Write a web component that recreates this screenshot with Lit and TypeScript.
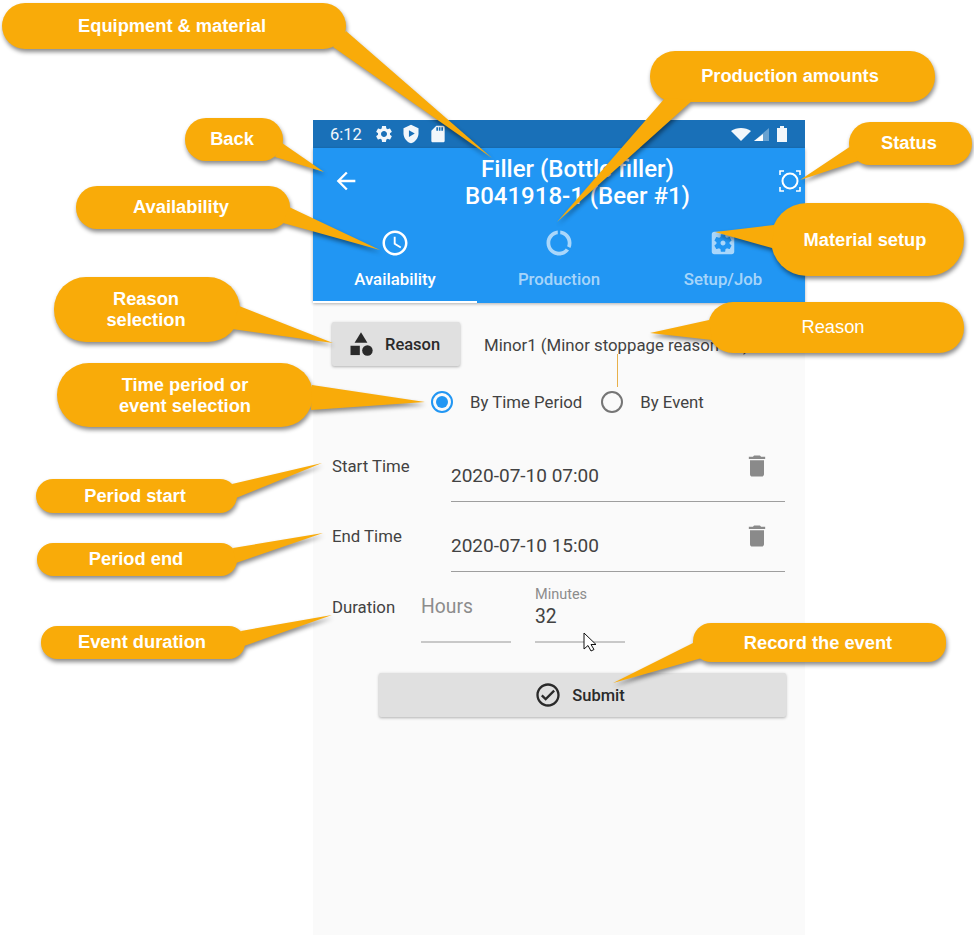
import { LitElement, html, css, svg } from "lit";
import { customElement } from "lit/decorators.js";

interface Callout {
  x: number;
  y: number;
  w: number;
  h: number;
  r: number;
  tail: string;
  cx: number;
  lines: { y: number; text: string }[];
  plain?: boolean;
}

const CALLOUTS: Callout[] = [
  { x: 2, y: 3, w: 344, h: 46, r: 23, tail: "346,31 492,158 333,47", cx: 172, lines: [{ y: 26, text: "Equipment & material" }] },
  { x: 185, y: 118, w: 98, h: 43, r: 21, tail: "282,143 324,172 275,157", cx: 232, lines: [{ y: 139, text: "Back" }] },
  { x: 76, y: 186, w: 214, h: 43, r: 21, tail: "289,207 380,250 283,223", cx: 181, lines: [{ y: 207, text: "Availability" }] },
  { x: 650, y: 51, w: 285, h: 51, r: 25, tail: "665,98 557,222 693,100", cx: 790, lines: [{ y: 76, text: "Production amounts" }] },
  { x: 849, y: 122, w: 123, h: 43, r: 21, tail: "851,146 800,180 858,161", cx: 909, lines: [{ y: 143, text: "Status" }] },
  { x: 771, y: 203, w: 193, h: 73, r: 36, tail: "774,225 715,232 772,248", cx: 865, lines: [{ y: 240, text: "Material setup" }] },
  { x: 708, y: 302, w: 256, h: 51, r: 25, tail: "709,320 650,333 712,340", cx: 833, plain: true, lines: [{ y: 327, text: "Reason" }] },
  { x: 54, y: 277, w: 186, h: 65, r: 32, tail: "239,306 333,343 232,329", cx: 146, lines: [{ y: 299, text: "Reason" }, { y: 320, text: "selection" }] },
  { x: 57, y: 363, w: 256, h: 64, r: 32, tail: "312,385 425,402 311,410", cx: 185, lines: [{ y: 385, text: "Time period or" }, { y: 406, text: "event selection" }] },
  { x: 36, y: 479, w: 201, h: 34, r: 17, tail: "232,484 322,463 236,498", cx: 135, lines: [{ y: 496, text: "Period start" }] },
  { x: 37, y: 543, w: 200, h: 33, r: 16, tail: "233,548 323,533 236,563", cx: 136, lines: [{ y: 559, text: "Period end" }] },
  { x: 41, y: 626, w: 204, h: 33, r: 16, tail: "241,631 332,615 244,646", cx: 142, lines: [{ y: 642, text: "Event duration" }] },
  { x: 693, y: 623, w: 253, h: 39, r: 18, tail: "695,642 613,683 702,658", cx: 818, lines: [{ y: 643, text: "Record the event" }] },
];

const GEAR = "M19.14 12.94c.04-.3.06-.61.06-.94 0-.32-.02-.64-.07-.94l2.03-1.58c.18-.14.23-.41.12-.61l-1.92-3.32c-.12-.22-.37-.29-.59-.22l-2.39.96c-.5-.38-1.03-.7-1.62-.94l-.36-2.54c-.04-.24-.24-.41-.48-.41h-3.84c-.24 0-.43.17-.47.41l-.36 2.54c-.59.24-1.13.57-1.62.94l-2.39-.96c-.22-.08-.47 0-.59.22L2.74 8.87c-.12.21-.08.47.12.61l2.03 1.58c-.05.3-.09.63-.09.94s.02.64.07.94l-2.03 1.58c-.18.14-.23.41-.12.61l1.92 3.32c.12.22.37.29.59.22l2.39-.96c.5.38 1.03.7 1.62.94l.36 2.54c.05.24.24.41.48.41h3.84c.24 0 .44-.17.47-.41l.36-2.54c.59-.24 1.13-.56 1.62-.94l2.39.96c.22.08.47 0 .59-.22l1.92-3.32c.12-.22.07-.47-.12-.61l-2.01-1.58zM12 15.6c-1.98 0-3.6-1.62-3.6-3.6s1.62-3.6 3.6-3.6 3.6 1.62 3.6 3.6-1.62 3.6-3.6 3.6z";
const CLOCK = "M11.99 2C6.47 2 2 6.48 2 12s4.47 10 9.99 10C17.52 22 22 17.52 22 12S17.52 2 11.99 2zM12 20c-4.42 0-8-3.58-8-8s3.58-8 8-8 8 3.58 8 8-3.58 8-8 8zM12.5 7H11v6l5.25 3.15.75-1.23-4.5-2.67z";
const USAGE = "M13 2.05v3.03c3.39.49 6 3.39 6 6.92 0 .9-.18 1.75-.48 2.54l2.6 1.53c.56-1.24.88-2.62.88-4.07 0-5.18-3.95-9.45-9-9.95zM12 19c-3.87 0-7-3.13-7-7 0-3.53 2.61-6.43 6-6.92V2.05C5.94 2.55 2 6.81 2 12c0 5.52 4.47 10 9.99 10 3.31 0 6.24-1.61 8.06-4.09l-2.6-1.53C16.17 18.03 14.21 19 12 19z";
const SETUP = "M12 10c-1.1 0-2 .9-2 2s.9 2 2 2 2-.9 2-2-.9-2-2-2zm7-7H5c-1.11 0-2 .9-2 2v14c0 1.1.89 2 2 2h14c1.11 0 2-.9 2-2V5c0-1.1-.89-2-2-2zm-1.75 9c0 .23-.02.46-.05.68l1.48 1.16c.13.11.17.3.08.45l-1.4 2.42c-.09.15-.27.21-.43.15l-1.74-.7c-.36.28-.76.51-1.18.69l-.26 1.85c-.03.17-.18.3-.35.3h-2.8c-.17 0-.32-.13-.35-.29l-.26-1.85c-.43-.18-.82-.41-1.18-.69l-1.74.7c-.16.06-.34 0-.43-.15l-1.4-2.42c-.09-.15-.05-.34.08-.45l1.48-1.16c-.03-.23-.05-.46-.05-.69 0-.23.02-.46.05-.68l-1.48-1.16c-.13-.11-.17-.3-.08-.45l1.4-2.42c.09-.15.27-.21.43-.15l1.74.7c.36-.28.76-.51 1.18-.69l.26-1.85c.03-.17.18-.3.35-.3h2.8c.17 0 .32.13.35.29l.26 1.85c.43.18.82.41 1.18.69l1.74-.7c.16-.06.34 0 .43.15l1.4 2.42c.09.15.05.34-.08.45l-1.48 1.16c.03.23.05.46.05.69z";
const TRASH = "M6 19c0 1.1.9 2 2 2h8c1.1 0 2-.9 2-2V7H6v12zM19 4h-3.5l-1-1h-5l-1 1H5v2h14V4z";
const CHECK = "M12 2C6.48 2 2 6.48 2 12s4.48 10 10 10 10-4.48 10-10S17.52 2 12 2zm0 18c-4.41 0-8-3.59-8-8s3.59-8 8-8 8 3.59 8 8-3.59 8-8 8zm4.59-12.42L10 14.17l-2.59-2.58L6 13l4 4 8-8z";
const SD = "M18 2h-8L4.02 8 4 20c0 1.1.9 2 2 2h12c1.1 0 2-.9 2-2V4c0-1.1-.9-2-2-2zm-6 6h-2V4h2v4zm3 0h-2V4h2v4zm3 0h-2V4h2v4z";

const icon = (d: string, size: number) => html`<svg width=${size} height=${size} viewBox="0 0 24 24" fill="currentColor"><path d=${d}></path></svg>`;

@customElement("app-root")
export class AppRoot extends LitElement {
  static styles = css`
    :host {
      display: block;
      position: relative;
      height: 935px;
      overflow: hidden;
      background: #fff;
      padding: 120px 169px 0 313px;
      box-sizing: border-box;
      font-family: Roboto, "Liberation Sans", sans-serif;
    }
    svg {
      display: block;
      flex: none;
    }
    .phone {
      background: #fafafa;
      height: 815px;
    }
    .status {
      height: 28px;
      background: #1970b8;
      color: #f2f7fb;
      display: flex;
      align-items: center;
      padding: 0 17px;
      font-size: 16.5px;
    }
    .status .time {
      width: 44px;
    }
    .status .left {
      display: flex;
      gap: 7px;
      align-items: center;
    }
    .status .right {
      margin-left: auto;
      display: flex;
      align-items: center;
      gap: 3px;
    }
    .battery {
      margin: 0 1px 0 5px;
    }
    .appbar {
      background: #2196f3;
      color: #fff;
      box-shadow: 0 1px 3px rgba(0, 0, 0, 0.3);
    }
    .titlebar {
      display: flex;
      height: 78px;
    }
    .back {
      width: 66px;
      padding: 19px 0 0 19px;
      box-sizing: border-box;
    }
    .title {
      flex: 1;
      padding: 8px 2px 0 0;
      text-align: center;
      font-size: 24px;
      font-weight: 500;
      line-height: 27px;
    }
    .state {
      width: 27px;
      padding: 22px 0 0 1px;
      box-sizing: border-box;
    }
    .tabs {
      display: flex;
      height: 77px;
    }
    .tab {
      flex: 1;
      display: flex;
      flex-direction: column;
      align-items: center;
      padding-top: 2px;
      gap: 11px;
      box-sizing: border-box;
      color: rgba(255, 255, 255, 0.62);
      font-size: 16.8px;
      font-weight: 500;
      line-height: 20px;
    }
    .tab.active {
      color: #fff;
      box-shadow: inset 0 -2px 0 #fff;
    }
    .reason-row {
      display: flex;
      align-items: center;
      padding: 19px 0 0 19px;
    }
    .btn {
      background: #e0e0e0;
      color: #2a2a2a;
      border-radius: 2px;
      box-shadow: 0 1px 3px rgba(0, 0, 0, 0.3);
      display: flex;
      align-items: center;
      height: 44px;
      font-size: 16.5px;
      font-weight: 500;
    }
    .btn span {
      padding-top: 1px;
    }
    .reason-btn {
      width: 128px;
      padding-left: 15px;
      gap: 10px;
      box-sizing: border-box;
    }
    .reason-text {
      margin-left: 24px;
      padding-top: 1px;
      font-size: 16.8px;
      color: #424242;
    }
    .radios {
      display: flex;
      align-items: center;
      height: 24px;
      margin: 24px 0 0 118px;
      font-size: 16.8px;
      color: #424242;
    }
    .radio {
      width: 22px;
      height: 22px;
      border-radius: 50%;
      border: 2px solid #757575;
      box-sizing: border-box;
      margin-right: 17px;
      display: flex;
      align-items: center;
      justify-content: center;
    }
    .radio.on {
      border-color: #2196f3;
    }
    .radio.on::after {
      content: "";
      width: 12px;
      height: 12px;
      border-radius: 50%;
      background: #2196f3;
    }
    .radio-gap {
      width: 19px;
    }
    .fields {
      margin: 32px 0 0 19px;
      display: flex;
      flex-direction: column;
      gap: 14px;
    }
    .field-row {
      display: grid;
      grid-template-columns: 119px 334px;
    }
    .label {
      font-size: 16.8px;
      line-height: 20px;
      padding-top: 10px;
      color: #424242;
    }
    .field {
      height: 56px;
      box-sizing: border-box;
      border-bottom: 1px solid #9e9e9e;
      display: flex;
      justify-content: space-between;
      padding-right: 14px;
      font-size: 19px;
      line-height: 24px;
      color: #424242;
    }
    .field .value {
      padding-top: 18px;
    }
    .field .trash {
      padding-top: 6px;
      color: #8a8a8a;
    }
    .duration {
      display: grid;
      grid-template-columns: 89px 90px 90px;
      margin: 12px 0 0 19px;
    }
    .duration .label {
      padding-top: 13px;
    }
    .num {
      height: 59px;
      box-sizing: border-box;
      border-bottom: 2px solid #c8c8c8;
      font-size: 19.3px;
      line-height: 24px;
      color: #424242;
    }
    .num.hours {
      padding-top: 11px;
      color: #8c8c8c;
    }
    .num.minutes {
      margin-left: 24px;
      width: 90px;
      padding-top: 3px;
    }
    .num small {
      display: block;
      font-size: 14.5px;
      line-height: 16px;
      color: #8c8c8c;
      margin-bottom: 2px;
    }
    .submit {
      margin: 30px 0 0 66px;
      width: 407px;
      padding-right: 6px;
      box-sizing: border-box;
      justify-content: center;
      gap: 10px;
    }
    .overlay {
      position: absolute;
      left: 0;
      top: 0;
    }
    .bubble {
      filter: drop-shadow(1px 3px 2px rgba(0, 0, 0, 0.45));
    }
    .overlay text {
      font-family: "Liberation Sans", Arial, sans-serif;
      font-size: 18.3px;
      font-weight: 700;
      fill: #fff;
      text-anchor: middle;
    }
    .overlay text.plain {
      font-weight: 400;
    }
  `;

  renderOverlay() {
    return html`<svg class="overlay" width="974" height="935" viewBox="0 0 974 935">
      ${CALLOUTS.map(
        (c) => svg`<g class="bubble">
          <rect x=${c.x} y=${c.y} width=${c.w} height=${c.h} rx=${c.r} fill="#f9ab09"></rect>
          <polygon points=${c.tail} fill="#f9ab09"></polygon>
        </g>
        ${c.lines.map((l) => svg`<text class=${c.plain ? "plain" : ""} x=${c.cx} y=${l.y + 6}>${l.text}</text>`)}`
      )}
      <rect x="617" y="354" width="1" height="33" fill="#e8b04a"></rect>
      <path d="M584 633V649L588 645.5L591 651L594 649.5L591 644.5H596Z" fill="#fff" stroke="#111" stroke-width="1"></path>
    </svg>`;
  }

  render() {
    return html`
      <div class="phone">
        <div class="status">
          <span class="time">6:12</span>
          <div class="left">
            ${icon(GEAR, 20)}
            <svg width="20" height="20" viewBox="0 0 24 24" fill="currentColor">
              <path d="M12 1L3 5v6c0 5.55 3.84 10.74 9 12 5.16-1.26 9-6.45 9-12V5l-9-4z"></path>
              <path d="M9.5 7.5v8l7-4z" fill="#1970b8"></path>
            </svg>
            ${icon(SD, 20)}
          </div>
          <div class="right">
            <svg width="20" height="13" viewBox="0 0 20 13" fill="currentColor"><path d="M0 3C5.5-1 14.5-1 20 3L10 13z"></path></svg>
            <svg width="15" height="13" viewBox="0 0 15 13">
              <path d="M15 0V13H0z" fill="#fff" fill-opacity="0.35"></path>
              <path d="M9 6V13H0z" fill="#fff"></path>
            </svg>
            <svg class="battery" width="10" height="16" viewBox="0 0 10 16" fill="currentColor"><path d="M3 0h4v2h3v14H0V2h3z"></path></svg>
          </div>
        </div>
        <div class="appbar">
          <div class="titlebar">
            <div class="back">${icon("M20 11H7.83l5.59-5.59L12 4l-8 8 8 8 1.41-1.41L7.83 13H20v-2z", 28)}</div>
            <div class="title">Filler (Bottle filler)<br />B041918-1 (Beer #1)</div>
            <div class="state">
              <svg width="22" height="22" viewBox="0 0 22 22" fill="none" stroke="#fff" stroke-width="2">
                <circle cx="11" cy="11" r="7.5"></circle>
                <path d="M1 5V1H5M17 1H21V5M21 17V21H17M5 21H1V17" stroke-width="1.6"></path>
              </svg>
            </div>
          </div>
          <div class="tabs">
            <div class="tab active">${icon(CLOCK, 30)}<span>Availability</span></div>
            <div class="tab">${icon(USAGE, 30)}<span>Production</span></div>
            <div class="tab">${icon(SETUP, 30)}<span>Setup/Job</span></div>
          </div>
        </div>
        <div class="reason-row">
          <div class="btn reason-btn">
            <svg width="28" height="28" viewBox="0 0 24 24" fill="currentColor">
              <path d="M12 2l-5.5 9h11z"></path>
              <circle cx="17.5" cy="17.5" r="4.5"></circle>
              <path d="M3 13.5h8v8H3z"></path>
            </svg>
            <span>Reason</span>
          </div>
          <span class="reason-text">Minor1 (Minor stoppage reason #1)</span>
        </div>
        <div class="radios">
          <span class="radio on"></span><span>By Time Period</span>
          <span class="radio-gap"></span>
          <span class="radio"></span><span>By Event</span>
        </div>
        <div class="fields">
          <div class="field-row">
            <div class="label">Start Time</div>
            <div class="field"><span class="value">2020-07-10 07:00</span><span class="trash">${icon(TRASH, 28)}</span></div>
          </div>
          <div class="field-row">
            <div class="label">End Time</div>
            <div class="field"><span class="value">2020-07-10 15:00</span><span class="trash">${icon(TRASH, 28)}</span></div>
          </div>
        </div>
        <div class="duration">
          <div class="label">Duration</div>
          <div class="num hours">Hours</div>
          <div class="num minutes"><small>Minutes</small>32</div>
        </div>
        <div class="btn submit">${icon(CHECK, 28)}<span>Submit</span></div>
      </div>
      ${this.renderOverlay()}
    `;
  }
}
